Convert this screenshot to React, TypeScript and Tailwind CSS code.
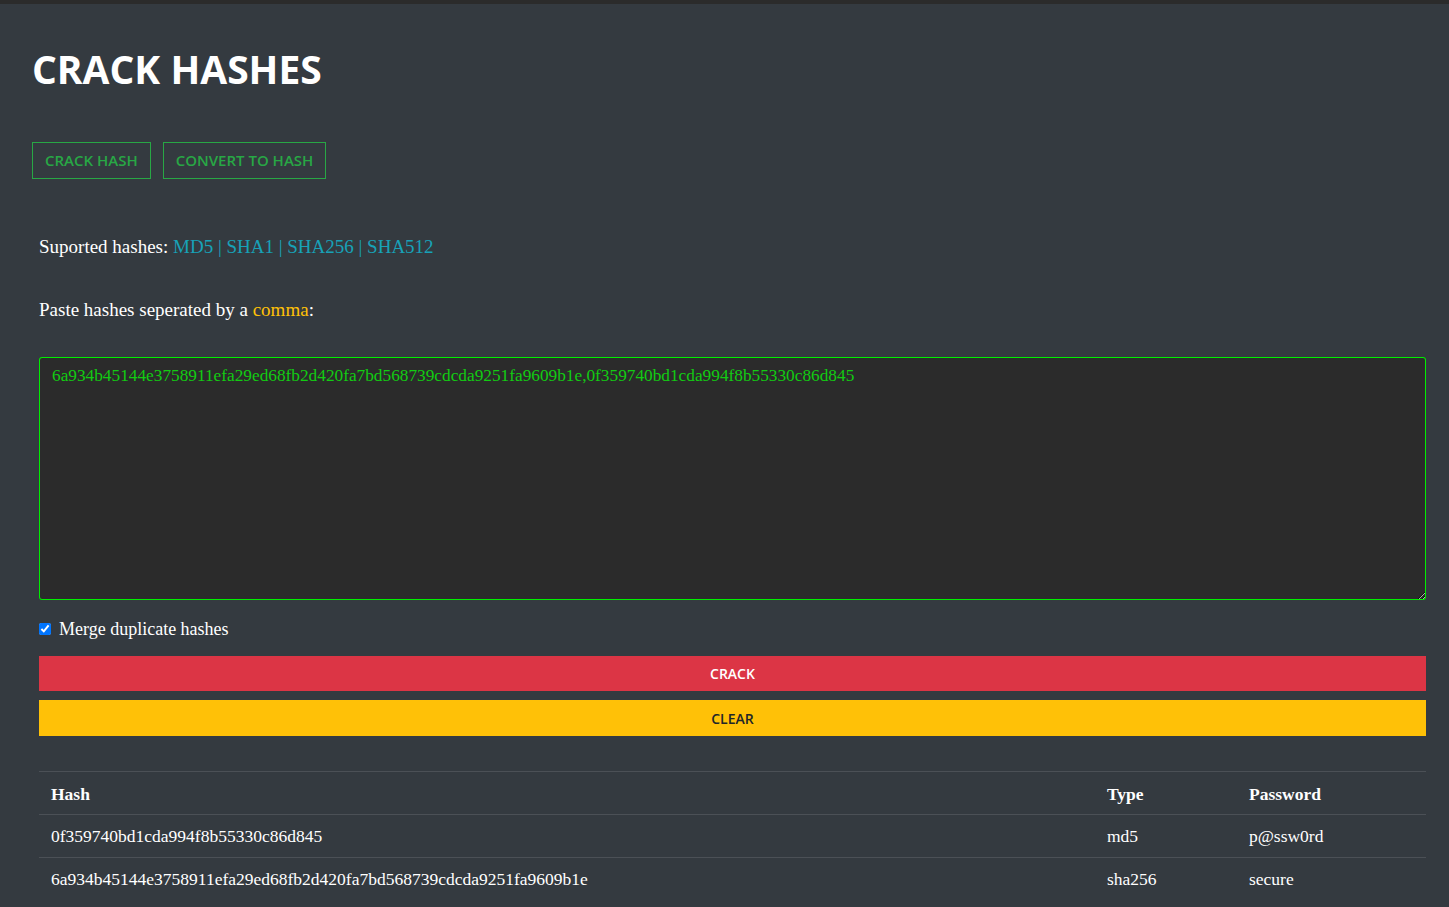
import { useState } from 'react';

const hashes =
  '6a934b45144e3758911efa29ed68fb2d420fa7bd568739cdcda9251fa9609b1e,0f359740bd1cda994f8b55330c86d845';

const results = [
  { hash: '0f359740bd1cda994f8b55330c86d845', type: 'md5', password: 'p@ssw0rd' },
  { hash: '6a934b45144e3758911efa29ed68fb2d420fa7bd568739cdcda9251fa9609b1e', type: 'sha256', password: 'secure' },
];

const sans = { fontFamily: '"Open Sans", "Noto Sans", sans-serif' };
const serif = { fontFamily: '"Liberation Serif", "DejaVu Serif", serif' };

export default function App() {
  const [value, setValue] = useState(hashes);
  const [merge, setMerge] = useState(true);

  return (
    <div className="min-h-screen bg-[#343a40] border-t-4 border-[#2b2b2b] text-white" style={serif}>
      <div className="px-8 pt-[38px]">
        <h1 className="text-[39px] font-bold leading-[53px]" style={sans}>
          CRACK HASHES
        </h1>
        <div className="flex gap-3 mt-[47px]" style={sans}>
          <button className="h-[37px] px-3 border border-[#28a745] text-[#28a745] text-[15px] font-semibold">
            CRACK HASH
          </button>
          <button className="h-[37px] px-3 border border-[#28a745] text-[#28a745] text-[15px] font-semibold">
            CONVERT TO HASH
          </button>
        </div>
      </div>

      <div className="px-[39px] pr-[23px]">
        <p className="mt-[56px] text-[19px] leading-6">
          Suported hashes: <span className="text-[#17a2b8]">MD5 | SHA1 | SHA256 | SHA512</span>
        </p>
        <p className="mt-[39px] text-[19px] leading-6">
          Paste hashes seperated by a <span className="text-[#ffc107]">comma</span>:
        </p>

        {/* lime frame drawn as a ring so it stays crisp at 1px */}
        <textarea
          value={value}
          onChange={(e) => setValue(e.target.value)}
          className="mt-[35px] block w-full h-[243px] bg-[#2b2b2b] border-0 ring-1 ring-inset ring-[#00ee00] rounded-[3px] px-[13px] py-[7px] text-[17.3px] leading-6 text-[#12cc12] outline-none"
          style={serif}
        />

        <label className="flex items-center gap-2 mt-[17px] text-[18px] leading-6">
          <input
            type="checkbox"
            checked={merge}
            onChange={(e) => setMerge(e.target.checked)}
            className="w-3 h-3 accent-[#0075ff]"
          />
          Merge duplicate hashes
        </label>

        <div className="mt-[15px] flex flex-col gap-[9px]" style={sans}>
          <button className="h-[35px] w-full bg-[#dc3545] text-white text-[14px] font-semibold">CRACK</button>
          <button className="h-[36px] w-full bg-[#ffc107] text-[#212529] text-[14px] font-semibold">CLEAR</button>
        </div>

        <table className="mt-[35px] w-full text-[17.5px]">
          <thead>
            <tr className="border-t border-[#4b5056] h-[43px] text-left">
              <th className="px-3 pt-[2px] font-bold">Hash</th>
              <th className="px-3 pt-[2px] font-bold w-[142px]">Type</th>
              <th className="px-3 pt-[2px] font-bold w-[189px]">Password</th>
            </tr>
          </thead>
          <tbody>
            {results.map((r) => (
              <tr key={r.hash} className="border-t border-[#4b5056] h-[43px]">
                <td className="px-3">{r.hash}</td>
                <td className="px-3">{r.type}</td>
                <td className="px-3">{r.password}</td>
              </tr>
            ))}
          </tbody>
        </table>
      </div>
    </div>
  );
}
